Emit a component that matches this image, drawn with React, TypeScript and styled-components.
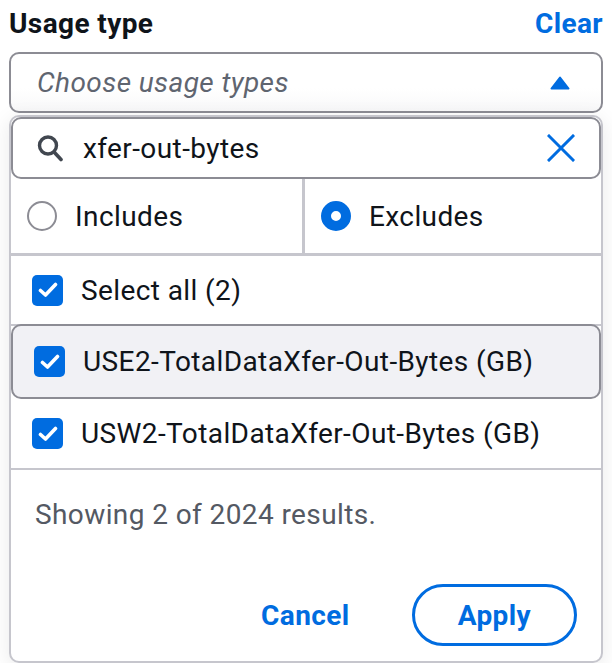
import React, { useState } from "react";
import styled, { createGlobalStyle } from "styled-components";

const GlobalStyle = createGlobalStyle`
  html, body {
    margin: 0;
    padding: 0;
    background: #ffffff;
  }
  body {
    font-family: Roboto, "Liberation Sans", sans-serif;
    color: #0f141a;
    letter-spacing: 0.4px;
    -webkit-font-smoothing: antialiased;
  }
  * { box-sizing: border-box; }
`;

const blue = "#006ce0";
const inputBorder = "#8c8c94";
const divider = "#c6c6cd";

const Page = styled.div`
  width: 612px;
  padding: 0 9px;
`;

const Header = styled.div`
  display: flex;
  justify-content: space-between;
  align-items: center;
  height: 46px;
  margin-bottom: 6px;
`;

const Title = styled.span`
  font-size: 28px;
  font-weight: 700;
`;

const LinkButton = styled.button`
  border: 0;
  background: none;
  padding: 0;
  font: inherit;
  font-size: 28px;
  font-weight: 700;
  letter-spacing: 0.4px;
  color: ${blue};
  cursor: pointer;
`;

const Combo = styled.div`
  display: flex;
  align-items: center;
  justify-content: space-between;
  height: 61px;
  border: 2px solid ${inputBorder};
  border-radius: 10px;
  padding: 0 31px 0 26px;
  background: linear-gradient(#ffffff 60%, #f8f8f9);
`;

const Placeholder = styled.span`
  font-size: 28px;
  font-style: italic;
  color: #5f6570;
`;

const Panel = styled.div`
  margin-top: 2px;
  border: 2px solid ${divider};
  border-radius: 10px;
  background: #ffffff;
  box-shadow: 0 4px 20px 1px rgba(0, 7, 22, 0.08);
  overflow: hidden;
`;

const Search = styled.div`
  display: flex;
  align-items: center;
  height: 62px;
  border: 2px solid ${inputBorder};
  border-radius: 10px;
  padding: 0 24px 0 24px;
  gap: 20px;
`;

const SearchText = styled.span`
  flex: 1;
  font-size: 28px;
  color: #0f141a;
`;

const RadioRow = styled.div`
  display: grid;
  grid-template-columns: 294px 1fr;
  border-bottom: 3px solid ${divider};
`;

const RadioCell = styled.label<{ $divided?: boolean }>`
  display: flex;
  align-items: center;
  gap: 18px;
  height: 74px;
  padding-left: 16px;
  font-size: 28px;
  border-right: ${(p) => (p.$divided ? `3px solid ${divider}` : "0")};
`;

const RadioDot = styled.span<{ $checked?: boolean }>`
  width: 30px;
  height: 30px;
  border-radius: 50%;
  flex: none;
  background: #ffffff;
  border: ${(p) => (p.$checked ? `10px solid ${blue}` : `2px solid ${inputBorder}`)};
`;

const OptionRow = styled.div<{ $active?: boolean; $height: number }>`
  display: flex;
  align-items: center;
  gap: 18px;
  height: ${(p) => p.$height}px;
  padding-left: 21px;
  font-size: 28px;
  border-bottom: 2px solid ${divider};
  ${(p) =>
    p.$active &&
    `
    background: #f1f1f5;
    border: 2px solid ${inputBorder};
    border-radius: 10px;
    margin-top: -2px;
  `}
`;

const Box = styled.span`
  width: 31px;
  height: 31px;
  flex: none;
  border-radius: 5px;
  background: ${blue};
  display: flex;
  align-items: center;
  justify-content: center;
`;

const Footer = styled.div`
  padding: 25px 24px 15px 24px;
`;

const Status = styled.div`
  font-size: 28px;
  line-height: 40px;
  color: #545963;
`;

const Actions = styled.div`
  display: flex;
  justify-content: flex-end;
  align-items: center;
  gap: 16px;
  margin-top: 49px;
`;

const ActionButton = styled.button<{ $primary?: boolean }>`
  height: 62px;
  padding: 0 43px;
  border-radius: 31px;
  border: 3px solid ${(p) => (p.$primary ? blue : "transparent")};
  background: #ffffff;
  font-family: inherit;
  font-size: 28px;
  font-weight: 700;
  letter-spacing: 0.4px;
  color: ${blue};
  cursor: pointer;
`;

const CheckBox = () => (
  <Box>
    <svg width="20" height="16" viewBox="0 0 20 16">
      <path d="M2.5 8.5 L7.5 13 L17.5 2.5" fill="none" stroke="#fff" strokeWidth="3.6" strokeLinecap="round" strokeLinejoin="round" />
    </svg>
  </Box>
);

const Caret = () => (
  <svg width="20" height="14" viewBox="0 0 20 14">
    <path d="M10 1.5 L18.5 12.5 L1.5 12.5 Z" fill={blue} stroke={blue} strokeWidth="2" strokeLinejoin="round" />
  </svg>
);

const SearchIcon = () => (
  <svg width="26" height="28" viewBox="0 0 26 28">
    <circle cx="11" cy="11.5" r="8.5" fill="none" stroke="#414750" strokeWidth="3.4" />
    <path d="M17.5 18.5 L24 25.5" stroke="#414750" strokeWidth="3.6" strokeLinecap="round" />
  </svg>
);

const ClearIcon = () => (
  <svg width="28" height="28" viewBox="0 0 28 28">
    <path d="M2 2 L26 26 M26 2 L2 26" stroke={blue} strokeWidth="3" strokeLinecap="square" />
  </svg>
);

const options = [
  "USE2-TotalDataXfer-Out-Bytes (GB)",
  "USW2-TotalDataXfer-Out-Bytes (GB)",
];

export default function App() {
  const [mode, setMode] = useState<"include" | "exclude">("exclude");
  return (
    <>
      <GlobalStyle />
      <Page>
        <Header>
          <Title>Usage type</Title>
          <LinkButton>Clear</LinkButton>
        </Header>
        <Combo>
          <Placeholder>Choose usage types</Placeholder>
          <Caret />
        </Combo>
        <Panel>
          <Search>
            <SearchIcon />
            <SearchText>xfer-out-bytes</SearchText>
            <ClearIcon />
          </Search>
          <RadioRow>
            <RadioCell $divided onClick={() => setMode("include")}>
              <RadioDot $checked={mode === "include"} />
              Includes
            </RadioCell>
            <RadioCell onClick={() => setMode("exclude")}>
              <RadioDot $checked={mode === "exclude"} />
              Excludes
            </RadioCell>
          </RadioRow>
          <OptionRow $height={70}>
            <CheckBox />
            Select all (2)
          </OptionRow>
          {options.map((o, i) => (
            <OptionRow key={o} $active={i === 0} $height={i === 0 ? 75 : 71}>
              <CheckBox />
              {o}
            </OptionRow>
          ))}
          <Footer>
            <Status>Showing 2 of 2024 results.</Status>
            <Actions>
              <ActionButton>Cancel</ActionButton>
              <ActionButton $primary>Apply</ActionButton>
            </Actions>
          </Footer>
        </Panel>
      </Page>
    </>
  );
}
